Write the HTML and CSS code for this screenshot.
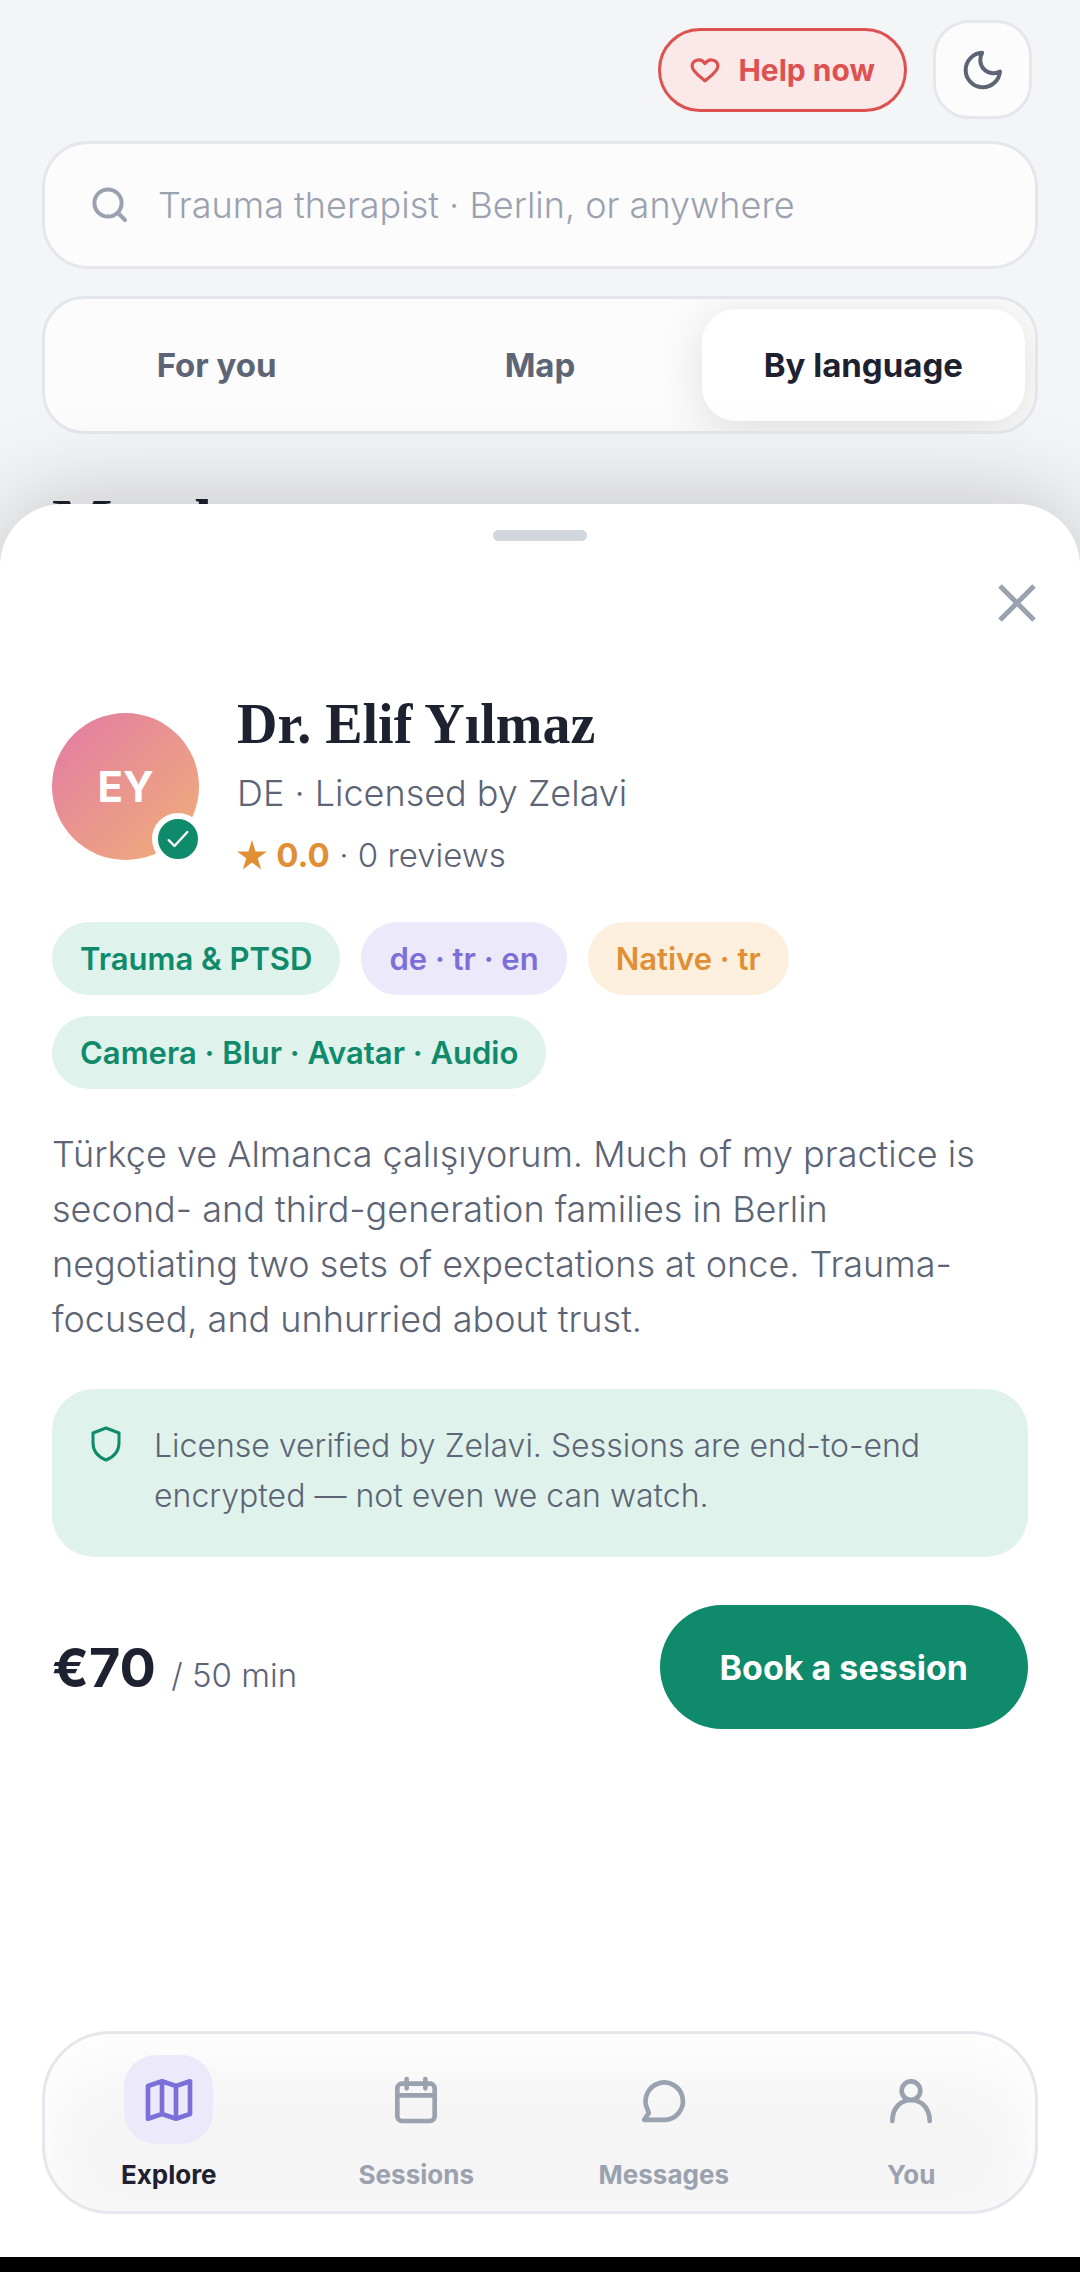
FILE: index.html
```html
<!doctype html>
<html lang="en">
  <head>
    <meta charset="utf-8">
    <meta name="viewport" content="width=device-width, initial-scale=1">
    <title>Zelavi</title>
    <link rel="stylesheet" href="styles.css">
  </head>
  <body>
    <div class="explore">
      <header class="topbar">
        <button class="help" type="button">
          <svg class="icon-heart" viewBox="0 0 28 24"><path d="M14 22C10 18.500 2 13.500 2 8.500C2 3 9.500 0 14 6C18.500 0 26 3 26 8.500C26 13.500 18 18.500 14 22Z"/></svg>
          Help now
        </button>
        <button class="theme" type="button" aria-label="Dark mode">
          <svg class="icon" viewBox="0 0 24 24"><path d="M20.500 12.800A8.600 8.600 0 1 1 11.600 3.400A6.700 6.700 0 0 0 20.500 12.800Z"/></svg>
        </button>
      </header>
      <label class="search">
        <svg class="icon" viewBox="0 0 24 24"><circle cx="11" cy="11" r="6.800"/><path d="M16 16L19.500 19.500"/></svg>
        <input type="text" aria-label="Search" placeholder="Trauma therapist · Berlin, or anywhere">
      </label>
      <div class="tabs">
        <button type="button">For you</button>
        <button type="button">Map</button>
        <button type="button" class="active">By language</button>
      </div>
      <h1>Matches</h1>
    </div>

    <main class="sheet">
      <div class="handle"></div>
      <button class="close" type="button" aria-label="Close">
        <svg viewBox="0 0 38 38"><path d="M2 2L36 36M36 2L2 36"/></svg>
      </button>

      <section class="profile">
        <div class="avatar">EY
          <span class="badge"><svg viewBox="0 0 24 24"><path d="M4 13L9 18L20 6"/></svg></span>
        </div>
        <div class="who">
          <h2>Dr. Elif Yılmaz</h2>
          <p>DE · Licensed by Zelavi</p>
          <p class="rating">
            <svg viewBox="0 0 30 30"><path d="M15 0L18.500 11.400H30L20.700 18.300L24.200 29.500L15 22.600L5.800 29.500L9.300 18.300L0 11.400H11.500Z"/></svg>
            <b>0.0</b> · 0 reviews
          </p>
        </div>
      </section>

      <ul class="tags">
        <li>Trauma &amp; PTSD</li>
        <li class="purple">de · tr · en</li>
        <li class="orange">Native · tr</li>
        <li>Camera · Blur · Avatar · Audio</li>
      </ul>

      <p class="bio">Türkçe ve Almanca çalışıyorum. Much of my practice is second- and third-generation families in Berlin negotiating two sets of expectations at once. Trauma-focused, and unhurried about trust.</p>

      <div class="notice">
        <svg viewBox="0 0 30 36"><path d="M15 2L28 7V17C28 25 22.500 31 15 34C7.500 31 2 25 2 17V7Z"/></svg>
        <p>License verified by Zelavi. Sessions are end-to-end encrypted — not even we can watch.</p>
      </div>

      <div class="booking">
        <p><strong>€70</strong> / 50 min</p>
        <button type="button">Book a session</button>
      </div>

      <nav class="nav">
        <a href="#" class="active">
          <span><svg class="icon" viewBox="0 0 24 24"><path d="M3 6L9 4L15 6L21 4V18L15 20L9 18L3 20ZM9 4V18M15 6V20"/></svg></span>
          Explore
        </a>
        <a href="#">
          <span><svg class="icon" viewBox="0 0 24 24"><rect x="4" y="5" width="16" height="16" rx="2"/><path d="M4 10H20M8 3V7M16 3V7"/></svg></span>
          Sessions
        </a>
        <a href="#">
          <span><svg class="icon" viewBox="0 0 24 24"><path d="M12.500 20.500H3.500L5.500 17.500L4.900 16A8 8 0 1 1 12.500 20.500Z"/></svg></span>
          Messages
        </a>
        <a href="#">
          <span><svg class="icon" viewBox="0 0 24 24"><circle cx="12" cy="8" r="4"/><path d="M4 21C4 9 20 9 20 21"/></svg></span>
          You
        </a>
      </nav>
    </main>
  </body>
</html>
```
FILE: styles.css
```css
* {
  box-sizing: border-box;
}
body {
  margin: 0;
  min-height: 100vh;
  display: flex;
  flex-direction: column;
  background: #f4f5f7;
  border-bottom: 15px solid #000;
  color: #5c6475;
  font-family: Inter, "Noto Sans", sans-serif;
  font-size: 36px;
  font-weight: 300;
}
h1, h2, p, ul {
  margin: 0;
  padding: 0;
}
button {
  font: inherit;
  color: inherit;
  background: none;
  border: none;
  padding: 0;
  cursor: pointer;
}
svg {
  fill: none;
  stroke: currentColor;
  stroke-linecap: round;
  stroke-linejoin: round;
  flex: none;
}
.icon {
  width: 48px;
  height: 48px;
  stroke-width: 2;
}

/* page behind the sheet */
.explore {
  padding: 20px 42px 0;
}
.topbar {
  display: flex;
  justify-content: flex-end;
  align-items: center;
  gap: 26px;
  padding-right: 6px;
  margin-bottom: 22px;
}
.help {
  display: flex;
  align-items: center;
  gap: 18px;
  height: 84px;
  padding: 0 29px;
  border: 3px solid #dd5250;
  border-radius: 42px;
  background: #fbe9e9;
  color: #dd5250;
  font-size: 30px;
  font-weight: 700;
}
.icon-heart {
  width: 30px;
  height: 26px;
  stroke-width: 3;
}
.theme {
  display: grid;
  place-items: center;
  width: 99px;
  height: 99px;
  border: 3px solid #e5e7ec;
  border-radius: 36px;
  background: #fcfcfd;
}
.search {
  display: flex;
  align-items: center;
  gap: 22px;
  height: 128px;
  padding: 0 41px;
  border: 3px solid #e5e7ec;
  border-radius: 46px;
  background: #fcfcfd;
  color: #9aa1af;
}
.search input {
  flex: 1;
  min-width: 0;
  border: none;
  outline: none;
  background: none;
  font: inherit;
  color: #1e2130;
}
.search input::placeholder {
  color: #9aa1af;
  opacity: 1;
}
.tabs {
  display: grid;
  grid-template-columns: repeat(3, 1fr);
  height: 138px;
  margin-top: 27px;
  padding: 10px;
  border: 3px solid #e3e6eb;
  border-radius: 42px;
  background: #fcfcfd;
  overflow: hidden;
}
.tabs button {
  border-radius: 34px;
  font-size: 33px;
  font-weight: 700;
}
.tabs .active {
  background: #fff;
  color: #1e2130;
  box-shadow: 0 8px 50px rgba(0, 0, 0, 0.12);
}
.explore h1 {
  margin: 58px 10px 0;
  color: #1e2130;
  font: bold 64px/60px "Liberation Serif", serif;
}

/* therapist sheet */
.sheet {
  position: relative;
  flex: 1;
  display: flex;
  flex-direction: column;
  margin-top: -48px;
  padding: 26px 52px 43px;
  border-radius: 62px 62px 0 0;
  background: #fff;
  box-shadow: 0 0 100px rgba(0, 0, 0, 0.22);
}
.handle {
  width: 94px;
  height: 11px;
  margin: 0 auto;
  border-radius: 6px;
  background: #d2d6dd;
}
.close {
  align-self: flex-end;
  width: 60px;
  height: 60px;
  margin: 32px -19px 0 0;
  color: #9aa1af;
}
.close svg {
  display: block;
  width: 38px;
  height: 38px;
  margin: auto;
  stroke-width: 5;
  stroke-linecap: butt;
}
.profile {
  display: flex;
  align-items: center;
  gap: 38px;
  margin-top: 59px;
}
.avatar {
  position: relative;
  display: grid;
  place-items: center;
  width: 147px;
  height: 147px;
  border-radius: 50%;
  background: linear-gradient(135deg, #e27aa5, #f1b077);
  color: #fff;
  font-size: 42px;
  font-weight: 700;
}
.badge {
  position: absolute;
  right: -5px;
  bottom: -5px;
  display: grid;
  place-items: center;
  width: 52px;
  height: 52px;
  border: 6px solid #fff;
  border-radius: 50%;
  background: #0f8a6b;
}
.badge svg {
  width: 28px;
  height: 28px;
  stroke-width: 2;
}
.who h2 {
  color: #1e2130;
  font: bold 56px/64px "Liberation Serif", serif;
}
.who p {
  margin-top: 12px;
  line-height: 50px;
}
.who .rating {
  font-size: 33px;
}
.rating svg {
  width: 30px;
  height: 30px;
  fill: #e08f35;
  stroke: none;
  vertical-align: -3px;
}
.rating b {
  color: #e08f35;
  font-weight: 700;
}
.tags {
  display: flex;
  flex-wrap: wrap;
  gap: 21px;
  margin-top: 42px;
  list-style: none;
}
.tags li {
  padding: 0 28px;
  border-radius: 37px;
  background: #dff2eb;
  color: #0f8a6b;
  font-size: 31px;
  font-weight: 600;
  line-height: 73px;
}
.tags .purple {
  background: #ece9fa;
  color: #7c6fd9;
}
.tags .orange {
  background: #fcefdd;
  color: #e08f35;
}
.bio {
  margin-top: 38px;
  padding-right: 20px;
  line-height: 55px;
}
.notice {
  display: flex;
  gap: 32px;
  margin-top: 42px;
  padding: 32px 38px 36px;
  border-radius: 42px;
  background: #dff2eb;
  font-size: 32px;
  line-height: 50px;
}
.notice svg {
  width: 32px;
  height: 36px;
  margin-top: 5px;
  color: #0f8a6b;
  stroke-width: 3;
}
.booking {
  display: flex;
  justify-content: space-between;
  align-items: center;
  margin-top: 48px;
  font-size: 33px;
}
.booking strong {
  margin-right: 6px;
  color: #1e2130;
  font-size: 54px;
  font-weight: 700;
}
.booking button {
  height: 124px;
  padding: 0 60px;
  border-radius: 62px;
  background: #0f8a6b;
  color: #fff;
  font-size: 34px;
  font-weight: 700;
}

/* bottom navigation */
.nav {
  display: grid;
  grid-template-columns: repeat(4, 1fr);
  height: 183px;
  margin: auto -10px 0;
  padding-top: 21px;
  border: 3px solid #e5e7ec;
  border-radius: 68px;
  background: #f5f5f6;
  box-shadow: inset 0 30px 70px #fff;
}
.nav a {
  display: flex;
  flex-direction: column;
  align-items: center;
  gap: 15px;
  color: #9aa1af;
  font-size: 26px;
  font-weight: 700;
  line-height: 32px;
  text-decoration: none;
}
.nav span {
  display: grid;
  place-items: center;
  width: 89px;
  height: 89px;
  border-radius: 32px;
}
.nav .icon {
  width: 56px;
  height: 56px;
}
.nav .active {
  color: #1e2130;
}
.nav .active span {
  background: #ece9fa;
  color: #7c6fd9;
}
```
